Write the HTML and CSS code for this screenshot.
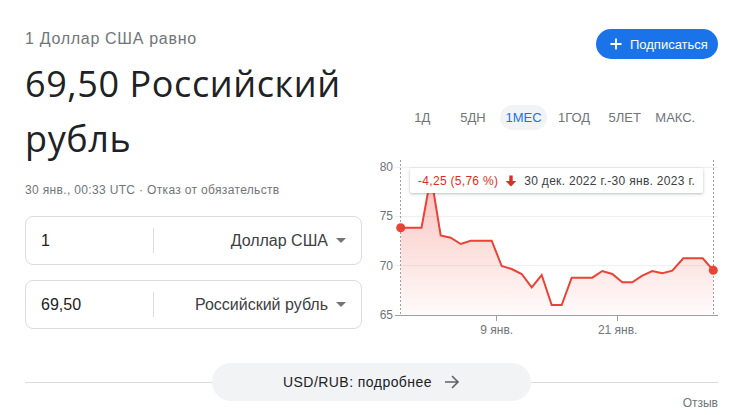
FILE: index.html
```html
<!DOCTYPE html>
<html lang="ru">
<head>
<meta charset="utf-8">
<link rel="stylesheet" href="styles.css">
</head>
<body>
<div class="page">
  <div class="main">
    <div class="left">
      <div class="eq">1 Доллар США равно</div>
      <div class="big">69,50 Российский рубль</div>
      <div class="meta">30 янв., 00:33 UTC · Отказ от обязательств</div>
      <div class="conv">
        <div class="box">
          <div class="amount">1</div>
          <div class="sep"></div>
          <div class="cur">Доллар США<span class="caret"></span></div>
        </div>
        <div class="box">
          <div class="amount">69,50</div>
          <div class="sep"></div>
          <div class="cur">Российский рубль<span class="caret"></span></div>
        </div>
      </div>
    </div>
    <div class="right">
      <div class="btnrow">
        <div class="subscribe">
          <svg class="plus" viewBox="0 0 12 12" width="12" height="12"><path d="M6 0.5v11M0.5 6h11" stroke="#fff" stroke-width="1.8" fill="none"/></svg>
          <span>Подписаться</span>
        </div>
      </div>
      <div class="tabs">
        <div class="tab"><span>1Д</span></div>
        <div class="tab"><span>5ДН</span></div>
        <div class="tab active"><span>1МЕС</span></div>
        <div class="tab"><span>1ГОД</span></div>
        <div class="tab"><span>5ЛЕТ</span></div>
        <div class="tab"><span>МАКС.</span></div>
      </div>
      <div class="chart">
        <svg class="plot" width="356" height="185" viewBox="362 155 356 185">
          <defs>
            <linearGradient id="fillg" gradientUnits="userSpaceOnUse" x1="0" y1="180" x2="0" y2="315">
              <stop offset="0" stop-color="#ea4335" stop-opacity="0.32"/>
              <stop offset="1" stop-color="#ea4335" stop-opacity="0.02"/>
            </linearGradient>
          </defs>
          <g stroke="#eef0f1" stroke-width="1">
            <line x1="395" y1="167.5" x2="718" y2="167.5"/>
            <line x1="395" y1="216.5" x2="718" y2="216.5"/>
            <line x1="395" y1="265.5" x2="718" y2="265.5"/>
          </g>
          <g fill="#70757a" font-family="Liberation Sans, Arial, sans-serif" font-size="12" text-anchor="end">
            <text x="393" y="171">80</text>
            <text x="393" y="220">75</text>
            <text x="393" y="269.5">70</text>
            <text x="393" y="319">65</text>
          </g>
          <path d="M400.7 227.7 L421.5 227.7 L431 176 L440.7 235.5 L450.7 237.7 L460.7 244 L470.7 240.7 L491.7 240.7 L501.7 266 L511.7 269 L521.7 274 L531.7 287.3 L541.7 275 L551.7 305 L561.7 305 L571.7 277.7 L592.3 277.7 L602.3 271 L612.3 274 L622.3 282.3 L632.3 282.3 L642.3 275.7 L652.3 271 L662.3 273.3 L672.3 270.7 L683.3 258.3 L702.7 258.3 L713.3 270.3 L713.3 315 L400.7 315 Z" fill="url(#fillg)"/>
          <g stroke="#9aa0a6" stroke-width="1" stroke-dasharray="2 2">
            <line x1="400.5" y1="160" x2="400.5" y2="315"/>
            <line x1="713.5" y1="160" x2="713.5" y2="315"/>
          </g>
          <line x1="395" y1="315.5" x2="718" y2="315.5" stroke="#9aa0a6" stroke-width="1"/>
          <g stroke="#9aa0a6" stroke-width="1">
            <line x1="496.5" y1="315" x2="496.5" y2="321"/>
            <line x1="617.5" y1="315" x2="617.5" y2="321"/>
          </g>
          <g fill="#70757a" font-family="Liberation Sans, Arial, sans-serif" font-size="12" text-anchor="middle">
            <text x="496.7" y="334">9 янв.</text>
            <text x="617.7" y="334">21 янв.</text>
          </g>
          <path d="M400.7 227.7 L421.5 227.7 L431 176 L440.7 235.5 L450.7 237.7 L460.7 244 L470.7 240.7 L491.7 240.7 L501.7 266 L511.7 269 L521.7 274 L531.7 287.3 L541.7 275 L551.7 305 L561.7 305 L571.7 277.7 L592.3 277.7 L602.3 271 L612.3 274 L622.3 282.3 L632.3 282.3 L642.3 275.7 L652.3 271 L662.3 273.3 L672.3 270.7 L683.3 258.3 L702.7 258.3 L713.3 270.3" fill="none" stroke="#ea4335" stroke-width="2" stroke-linejoin="miter"/>
          <circle cx="400.7" cy="227.7" r="4.5" fill="#ea4335"/>
          <circle cx="713.3" cy="270.3" r="4.5" fill="#ea4335"/>
        </svg>
        <div class="tooltip">
          <span class="chg">-4,25 (5,76&nbsp;%)</span>
          <svg class="down" viewBox="0 0 12 12" width="12" height="12"><path d="M4.3 0.5h3.4v5.5h3.6L6 11.5 0.7 6h3.6z" fill="#d93025"/></svg>
          <span class="range">30 дек. 2022 г.-30 янв. 2023 г.</span>
        </div>
      </div>
    </div>
  </div>
  <div class="more-row">
    <div class="more">
      <span>USD/RUB: подробнее</span>
      <svg class="arrow" viewBox="0 0 16 16" width="16" height="16"><path d="M1 8h13M8 2l6 6-6 6" stroke="#5f6368" stroke-width="1.6" fill="none"/></svg>
    </div>
  </div>
  <div class="feedback">Отзыв</div>
</div>
</body>
</html>
```
FILE: styles.css
```css
* { box-sizing: border-box; }
html, body { margin: 0; padding: 0; background: #fff; }
body { font-family: "Liberation Sans", Arial, sans-serif; color: #202124; }
.page { width: 740px; padding: 29px 22px 0 25px; }
.main { display: grid; grid-template-columns: 337px 1fr; }
.left { display: flex; flex-direction: column; }
.eq { font-size: 16px; line-height: 20px; color: #70757a; letter-spacing: 0.7px; }
.big { font-family: "Open Sans", sans-serif; font-size: 36px; line-height: 55px; color: #202124; margin-top: 7px; width: 335px; letter-spacing: 0.6px; }
.meta { font-size: 12px; line-height: 16px; color: #70757a; margin-top: 16px; letter-spacing: 0.34px; }
.conv { display: flex; flex-direction: column; gap: 15px; margin-top: 18px; }
.box { height: 49px; border: 1px solid #dadce0; border-radius: 8px; display: flex; align-items: center; padding: 0 15px; }
.amount { width: 112px; font-size: 16px; color: #202124; }
.sep { width: 1px; height: 25px; background: #dadce0; }
.cur { flex: 1; text-align: right; font-size: 16px; color: #3c4043; display: flex; align-items: center; justify-content: flex-end; }
.caret { width: 0; height: 0; border-left: 5px solid transparent; border-right: 5px solid transparent; border-top: 5px solid #70757a; margin-left: 8px; }
.right { display: flex; flex-direction: column; }
.btnrow { display: flex; justify-content: flex-end; }
.subscribe { height: 30px; width: 122px; background: #1a73e8; border-radius: 15px; color: #fff; font-size: 13px; display: flex; align-items: center; padding-left: 14px; gap: 8px; }
.plus { display: block; }
.tabs { display: flex; margin-top: 46px; padding-left: 35px; }
.tab { width: 50.6px; display: flex; justify-content: center; }
.tab span { font-size: 13px; line-height: 25px; height: 25px; color: #70757a; padding: 0 5px; border-radius: 13px; }
.tab.active span { background: #f1f3f4; color: #1a73e8; }
.chart { position: relative; margin-top: 25px; height: 185px; }
.plot { display: block; }
.tooltip { position: absolute; left: 48px; top: 13px; width: 293px; height: 25px; background: #fff; box-shadow: 0 1px 3px rgba(60,64,67,0.35); border-radius: 2px; display: flex; align-items: center; padding-left: 8px; font-size: 12px; letter-spacing: 0.3px; }
.chg { color: #d93025; }
.down { margin-left: 7px; margin-right: 7px; display: block; }
.range { color: #3c4043; }
.more-row { margin-top: 23px; height: 38px; display: flex; align-items: center; justify-content: center; background: linear-gradient(#dadce0, #dadce0) center / 100% 1px no-repeat; }
.more { width: 319px; height: 38px; border-radius: 19px; background: #f1f3f4; display: flex; align-items: center; justify-content: center; gap: 12px; font-size: 14px; color: #202124; letter-spacing: 0.45px; }
.arrow { display: block; }
.feedback { text-align: right; font-size: 12px; line-height: 16px; color: #70757a; margin-top: -6px; }
```
